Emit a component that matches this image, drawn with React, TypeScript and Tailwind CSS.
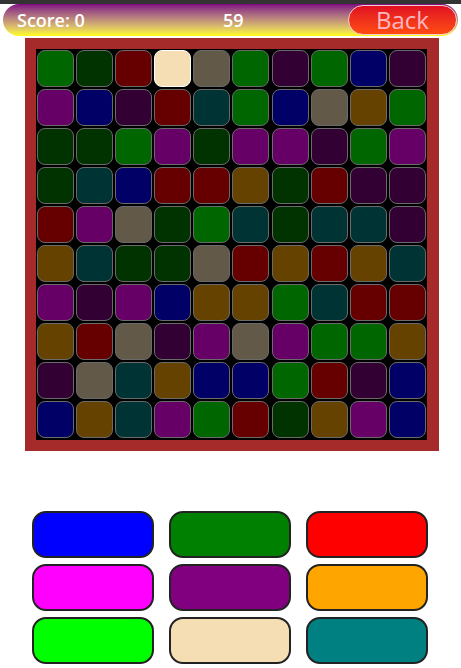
import React from "react";

const C: Record<string, string> = {
  G: "bg-[#006600]",
  D: "bg-[#003300]",
  R: "bg-[#660000]",
  W: "bg-[#625948]",
  P: "bg-[#330033]",
  B: "bg-[#000066]",
  M: "bg-[#660066]",
  O: "bg-[#664200]",
  T: "bg-[#003333]",
  S: "bg-[#f5deb3]",
};

const rows = [
  "GDRSWGPGBP",
  "MBPRTGBWOG",
  "DDGMDMMPGM",
  "DTBRRODRPP",
  "RMWDGTDTTP",
  "OTDDWRORO T".replace(" ", ""),
  "MPMBOOGTRR",
  "ORWPMWMGGO",
  "PWTOBBGRPB",
  "BOTMGRDOMB",
];

const buttons = [
  "bg-[#0000ff]",
  "bg-[#008000]",
  "bg-[#ff0000]",
  "bg-[#ff00ff]",
  "bg-[#800080]",
  "bg-[#ffa500]",
  "bg-[#00ff00]",
  "bg-[#f5deb3]",
  "bg-[#008080]",
];

export default function App() {
  return (
    <div className="w-[461px] h-[668px] bg-white overflow-hidden" style={{ fontFamily: '"Open Sans", sans-serif' }}>
      <div className="h-[4px] bg-[#333333]" />
      <div className="mx-[3px] h-[32px] rounded-full bg-gradient-to-b from-[#800080] to-[#ffff00] flex items-center relative">
        <span className="ml-[14px] text-white font-semibold text-[18px] leading-none">Score: 0</span>
        <span className="absolute left-[220px] text-white font-semibold text-[18px] leading-none">59</span>
        <div className="ml-auto mr-[1px] w-[109px] h-[30px] rounded-full border border-[#f3d0d0] bg-gradient-to-b from-[#e00a22] to-[#ff4a10] flex items-center justify-center">
          <span className="text-[#ffb6c1] text-[24px] leading-none">Back</span>
        </div>
      </div>
      <div className="h-[2px]" />
      <div className="ml-[25px] w-[414px] h-[413px] bg-[#a52a2a] p-[11px]">
        <div className="w-[391px] h-[391px] bg-black grid grid-cols-10 content-start">
          {rows.map((r, i) =>
            r.split("").map((c, j) => (
              <div
                key={i + "-" + j}
                className={`m-[1px] w-[37px] h-[37px] rounded-[8px] border-[1.5px] ${c === "S" ? "border-white" : "border-[#6a6a6a]"} ${C[c]}`}
              />
            ))
          )}
        </div>
      </div>
      <div className="ml-[32px] mt-[60px] grid grid-cols-[122px_122px_122px] gap-x-[15px] gap-y-[6px]">
        {buttons.map((b, i) => (
          <div key={i} className={`h-[47px] rounded-[14px] border-2 border-[#222222] ${b}`} />
        ))}
      </div>
    </div>
  );
}
